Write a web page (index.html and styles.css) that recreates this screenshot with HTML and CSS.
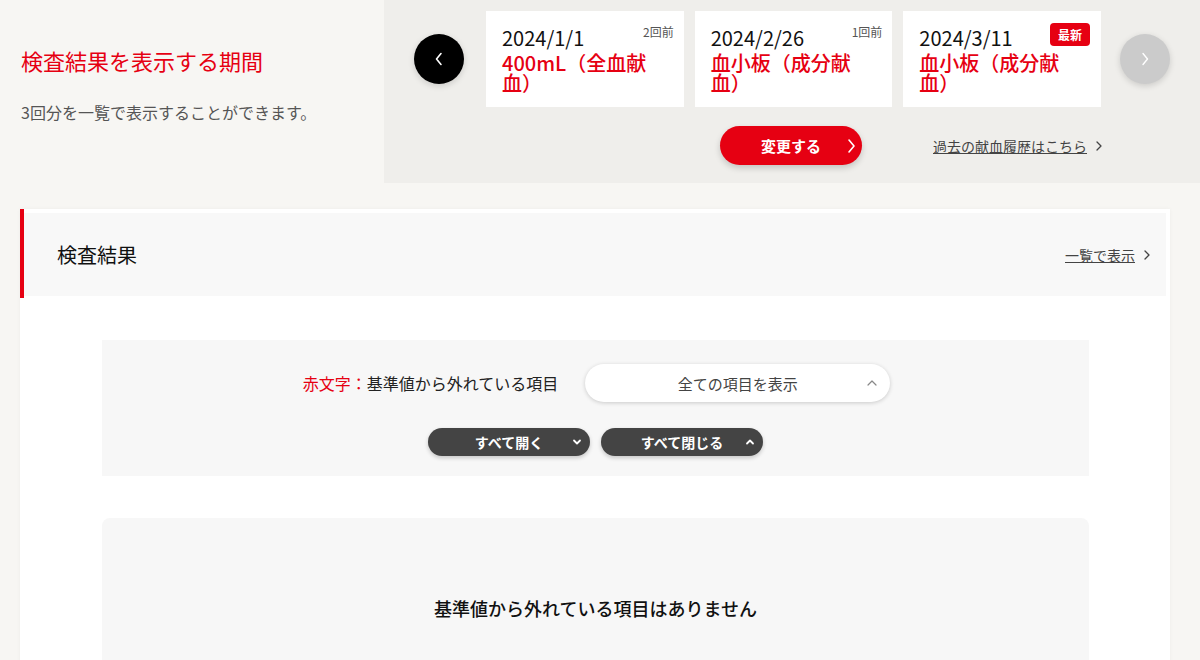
FILE: index.html
```html
<!DOCTYPE html>
<html lang="ja">
<head>
<meta charset="utf-8">
<title>検査結果</title>
<link rel="stylesheet" href="styles.css">
</head>
<body>
<div class="top">
  <div class="intro">
    <h1 class="intro-title">検査結果を表示する期間</h1>
    <p class="intro-text">3回分を一覧で表示することができます。</p>
  </div>
  <div class="period">
    <div class="carousel">
      <button class="nav nav-prev" aria-label="前へ">
        <svg width="12" height="16" viewBox="0 0 12 16"><path d="M8 2.5 L3.5 8 L8 13.5" fill="none" stroke="#fff" stroke-width="1.6" stroke-linecap="round" stroke-linejoin="round"/></svg>
      </button>
      <div class="cards">
        <div class="card">
          <span class="card-tag">2回前</span>
          <div class="card-date">2024/1/1</div>
          <div class="card-type">400mL（全血献血）</div>
        </div>
        <div class="card">
          <span class="card-tag">1回前</span>
          <div class="card-date">2024/2/26</div>
          <div class="card-type">血小板（成分献血）</div>
        </div>
        <div class="card">
          <span class="card-badge">最新</span>
          <div class="card-date">2024/3/11</div>
          <div class="card-type">血小板（成分献血）</div>
        </div>
      </div>
      <button class="nav nav-next" aria-label="次へ">
        <svg width="12" height="16" viewBox="0 0 12 16"><path d="M4 2.5 L8.5 8 L4 13.5" fill="none" stroke="#fff" stroke-width="1.4" stroke-linecap="round" stroke-linejoin="round"/></svg>
      </button>
    </div>
    <div class="actions">
      <span></span>
      <button class="change-btn">変更する
        <svg class="change-chev" width="10" height="16" viewBox="0 0 10 16"><path d="M3 2 L8 8 L3 14" fill="none" stroke="#fff" stroke-width="1.6" stroke-linecap="round" stroke-linejoin="round"/></svg>
      </button>
      <div class="history">
        <a class="history-link" href="#">過去の献血履歴はこちら</a>
        <svg width="8" height="12" viewBox="0 0 8 12"><path d="M2 2 L6 6 L2 10" fill="none" stroke="#444" stroke-width="1.3" stroke-linecap="round" stroke-linejoin="round"/></svg>
      </div>
    </div>
  </div>
</div>

<div class="result-card">
  <div class="result-head">
    <div class="result-head-inner">
      <h2 class="result-title">検査結果</h2>
      <div class="list-link">
        <a href="#">一覧で表示</a>
        <svg width="8" height="12" viewBox="0 0 8 12"><path d="M2 2 L6 6 L2 10" fill="none" stroke="#444" stroke-width="1.3" stroke-linecap="round" stroke-linejoin="round"/></svg>
      </div>
    </div>
  </div>
  <div class="result-body">
    <div class="filter">
      <div class="filter-row">
        <p class="legend"><span class="legend-red">赤文字：</span>基準値から外れている項目</p>
        <div class="select">
          <span>全ての項目を表示</span>
          <svg class="select-chev" width="12" height="8" viewBox="0 0 12 8"><path d="M2 6 L6 2 L10 6" fill="none" stroke="#888" stroke-width="1.2" stroke-linecap="round" stroke-linejoin="round"/></svg>
        </div>
      </div>
      <div class="toggle-row">
        <button class="toggle">すべて開く
          <svg class="toggle-chev" width="10" height="8" viewBox="0 0 10 8"><path d="M2 2.5 L5 5.5 L8 2.5" fill="none" stroke="#fff" stroke-width="1.8" stroke-linecap="round" stroke-linejoin="round"/></svg>
        </button>
        <button class="toggle">すべて閉じる
          <svg class="toggle-chev" width="10" height="8" viewBox="0 0 10 8"><path d="M2 5.5 L5 2.5 L8 5.5" fill="none" stroke="#fff" stroke-width="1.8" stroke-linecap="round" stroke-linejoin="round"/></svg>
        </button>
      </div>
    </div>
    <div class="empty">
      <p class="empty-text">基準値から外れている項目はありません</p>
    </div>
  </div>
</div>
</body>
</html>
```

FILE: styles.css
```css
* { box-sizing: border-box; }

html, body {
  margin: 0;
  padding: 0;
}

body {
  background: #f7f6f3;
  font-family: "Noto Sans CJK JP", "Noto Sans", sans-serif;
  color: #222;
  overflow: hidden;
  height: 660px;
}

button {
  font-family: inherit;
  border: none;
  cursor: pointer;
}

.top {
  display: flex;
  height: 183px;
}

.intro {
  width: 384px;
  padding: 44px 21px 0 21px;
}

.intro-title {
  margin: 0;
  font-size: 22px;
  line-height: 32px;
  font-weight: 400;
  color: #e60012;
}

.intro-text {
  margin: 24px 0 0;
  font-size: 16px;
  line-height: 24px;
  color: #555;
}

.period {
  flex: 1;
  background: #efeeeb;
  padding: 11px 30px 0 30px;
}

.carousel {
  display: flex;
  align-items: center;
}

.nav {
  width: 50px;
  height: 50px;
  border-radius: 50%;
  display: flex;
  align-items: center;
  justify-content: center;
  flex: none;
  box-shadow: 0 2px 6px rgba(0,0,0,0.15);
}

.nav-prev {
  background: #000;
  margin-right: 22px;
}

.nav-next {
  background: #cbcbcb;
  margin-left: 19px;
}

.cards {
  display: flex;
  gap: 11px;
  width: 615px;
}

.card {
  position: relative;
  flex: 1;
  height: 96px;
  background: #fff;
  padding: 16px 30px 0 16px;
}

.card-tag {
  position: absolute;
  top: 13px;
  right: 10px;
  font-size: 12px;
  line-height: 16px;
  color: #555;
}

.card-badge {
  position: absolute;
  top: 12px;
  right: 11px;
  width: 40px;
  height: 23px;
  border-radius: 4px;
  background: #e60012;
  color: #fff;
  font-size: 12px;
  font-weight: 700;
  line-height: 23px;
  text-align: center;
}

.card-date {
  font-size: 20px;
  line-height: 22px;
  color: #111;
}

.card-type {
  margin-top: 4px;
  font-size: 20px;
  line-height: 20px;
  font-weight: 500;
  color: #e60012;
}

.actions {
  display: grid;
  grid-template-columns: 1fr auto 1fr;
  align-items: center;
  width: 615px;
  margin: 19px 0 0 74px;
}

.change-btn {
  position: relative;
  width: 142px;
  height: 39px;
  border-radius: 20px;
  background: #e60012;
  color: #fff;
  font-size: 15px;
  font-weight: 700;
  padding: 0;
  box-shadow: 0 3px 6px rgba(0,0,0,0.18);
}

.change-chev {
  position: absolute;
  right: 6px;
  top: 12px;
}

.history {
  display: flex;
  align-items: center;
  gap: 8px;
  padding-left: 71px;
}

.history-link {
  font-size: 14px;
  color: #444;
  text-decoration: underline;
  white-space: nowrap;
}

.result-card {
  margin: 26px 30px 0 20px;
  background: #fff;
  height: 460px;
  box-shadow: 0 0 4px rgba(0,0,0,0.04);
}

.result-head {
  border-left: 4px solid #e60012;
  padding: 4px 4px 2px 0;
}

.result-head-inner {
  height: 83px;
  background: #f8f8f8;
  display: flex;
  align-items: center;
  justify-content: space-between;
  padding: 0 15px 0 33px;
}

.result-title {
  margin: 0;
  font-size: 20px;
  font-weight: 400;
  color: #111;
}

.list-link {
  display: flex;
  align-items: center;
  gap: 8px;
}

.list-link a {
  font-size: 14px;
  color: #444;
  text-decoration: underline;
}

.result-body {
  padding: 42px 81px 0 82px;
}

.filter {
  background: #f7f7f7;
  padding: 24px 0 20px;
}

.filter-row {
  display: flex;
  justify-content: center;
  align-items: center;
  gap: 27px;
  padding-left: 2px;
}

.legend {
  margin: 0;
  font-size: 16px;
  color: #222;
}

.legend-red {
  color: #e60012;
}

.select {
  position: relative;
  width: 305px;
  height: 38px;
  border-radius: 19px;
  background: #fff;
  box-shadow: 0 1px 4px rgba(0,0,0,0.18);
  display: flex;
  align-items: center;
  justify-content: center;
  font-size: 15px;
  color: #444;
}

.select-chev {
  position: absolute;
  right: 12px;
  top: 15px;
}

.toggle-row {
  display: flex;
  justify-content: center;
  gap: 11px;
  margin-top: 26px;
}

.toggle {
  position: relative;
  width: 162px;
  height: 28px;
  border-radius: 14px;
  background: #444;
  color: #fff;
  font-size: 14px;
  font-weight: 700;
  box-shadow: 0 2px 4px rgba(0,0,0,0.2);
}

.toggle-chev {
  position: absolute;
  right: 8px;
  top: 10px;
}

.empty {
  margin-top: 42px;
  background: #f7f7f7;
  border-radius: 8px;
  height: 200px;
  padding-top: 76px;
}

.empty-text {
  margin: 0;
  text-align: center;
  font-size: 18px;
  line-height: 28px;
  font-weight: 500;
  color: #111;
}
```
